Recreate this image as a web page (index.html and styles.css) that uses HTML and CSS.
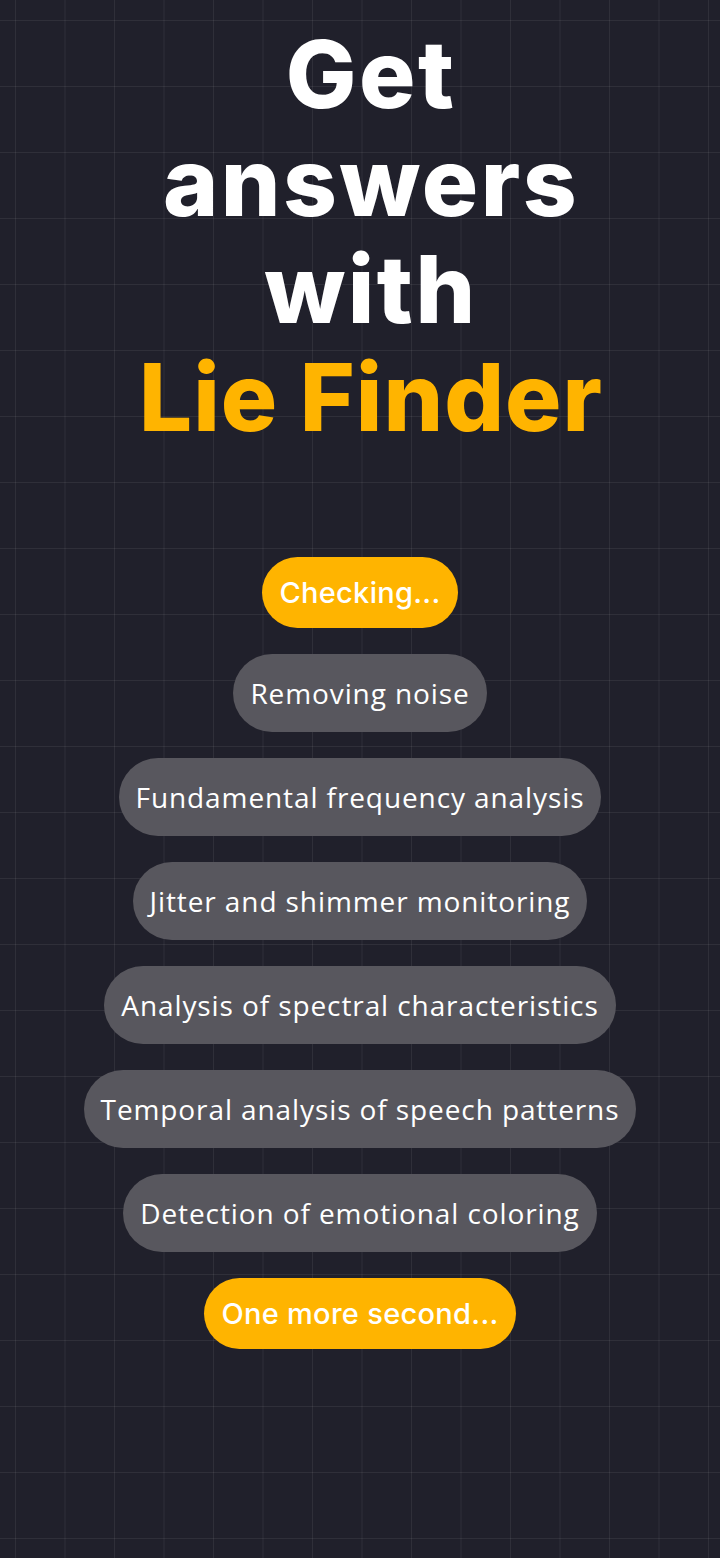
FILE: index.html
```html
<!DOCTYPE html>
<html>
<head>
  <meta charset="UTF-8">
  <title>Lie Finder</title>
  <link rel="stylesheet" href="styles.css">
</head>
<body>
  <div class="screen">
    <h1 class="headline">
      Get<br>answers<br>with<br><span class="brand">Lie Finder</span>
    </h1>

    <div class="steps">
      <div class="step step-active">Checking...</div>
      <div class="step">Removing noise</div>
      <div class="step">Fundamental frequency analysis</div>
      <div class="step">Jitter and shimmer monitoring</div>
      <div class="step">Analysis of spectral characteristics</div>
      <div class="step">Temporal analysis of speech patterns</div>
      <div class="step">Detection of emotional coloring</div>
      <div class="step step-active">One more second...</div>
    </div>
  </div>
</body>
</html>
```

FILE: styles.css
```css
html, body {
  margin: 0;
  padding: 0;
}
body {
  background-color: #20202b;
  background-image:
    linear-gradient(to right, rgba(255, 255, 255, 0.065) 1px, transparent 1px),
    linear-gradient(to bottom, rgba(255, 255, 255, 0.065) 1px, transparent 1px);
  background-size: 49.5px 66px;
  background-position: 15px 20px;
  min-height: 1558px;
  color: #fff;
}
.screen {
  display: flex;
  flex-direction: column;
  align-items: center;
}
.headline {
  margin: 0;
  padding: 21px 0 0 22px;
  font-family: Inter, 'Liberation Sans', sans-serif;
  font-weight: 800;
  font-size: 94px;
  line-height: 107.5px;
  letter-spacing: 2.5px;
  text-align: center;
  color: #fff;
}
.brand {
  color: #ffb400;
  letter-spacing: 1px;
}
.steps {
  display: flex;
  flex-direction: column;
  align-items: center;
  gap: 25px;
  margin-top: 106px;
}
.step {
  display: flex;
  align-items: center;
  height: 78px;
  padding: 0 17px;
  border-radius: 39px;
  background-color: #58575e;
  font-family: 'Open Sans', sans-serif;
  font-size: 28px;
  letter-spacing: 0.9px;
  color: #fff;
}
.step + .step {
  margin-top: 1px;
}
.step + .step-active {
  margin-top: 1px;
}
.step-active {
  height: 71px;
  border-radius: 36px;
  background-color: #ffb400;
  font-family: Inter, 'Liberation Sans', sans-serif;
  font-weight: 500;
  font-size: 29px;
  letter-spacing: 0.3px;
}
```
